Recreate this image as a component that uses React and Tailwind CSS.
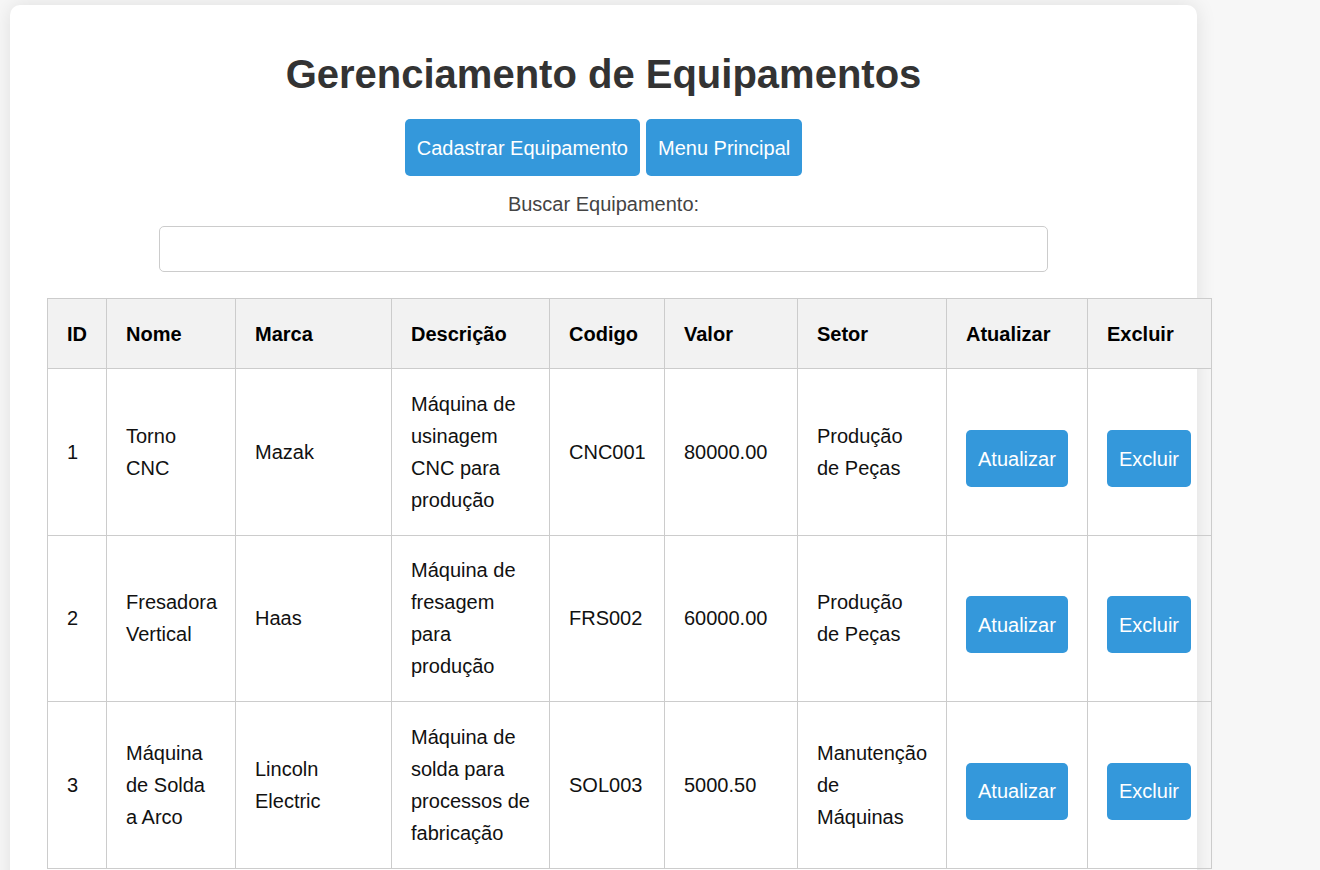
import React, { useState } from "react";

const equipamentos = [
  {
    id: 1,
    nome: "Torno CNC",
    marca: "Mazak",
    descricao: "Máquina de usinagem CNC para produção",
    codigo: "CNC001",
    valor: "80000.00",
    setor: "Produção de Peças",
  },
  {
    id: 2,
    nome: "Fresadora Vertical",
    marca: "Haas",
    descricao: "Máquina de fresagem para produção",
    codigo: "FRS002",
    valor: "60000.00",
    setor: "Produção de Peças",
  },
  {
    id: 3,
    nome: "Máquina de Solda a Arco",
    marca: "Lincoln Electric",
    descricao: "Máquina de solda para processos de fabricação",
    codigo: "SOL003",
    valor: "5000.50",
    setor: "Manutenção de Máquinas",
  },
];

// larguras das colunas (borda a borda)
const colunas = [
  { label: "ID", w: "w-[59px]" },
  { label: "Nome", w: "w-[129px]" },
  { label: "Marca", w: "w-[156px]" },
  { label: "Descrição", w: "w-[158px]" },
  { label: "Codigo", w: "w-[115px]" },
  { label: "Valor", w: "w-[133px]" },
  { label: "Setor", w: "w-[149px]" },
  { label: "Atualizar", w: "w-[141px]" },
  { label: "Excluir", w: "w-[124px]" },
];

const btn =
  "bg-[#3498db] text-white text-[20px] leading-[32px] px-[12px] py-[12.5px] rounded-[5px] cursor-pointer";

const td = "border border-[#ccc] px-[19px] py-[18.7px] align-middle text-left";

const App = () => {
  const [busca, setBusca] = useState("");

  return (
    <div
      className="min-h-screen bg-[#f7f7f7] pt-[5px] pl-[10px] text-[#333]"
      style={{ fontFamily: '"Liberation Sans", Arial, sans-serif' }}
    >
      <div className="w-[1187px] min-h-[900px] bg-white rounded-[10px] shadow-[0_0_20px_rgba(0,0,0,0.1)] px-[37px] pt-[37px]">
        {/* cabeçalho */}
        <h1 className="text-center text-[40px] leading-[64px] font-bold text-[#333]">
          Gerenciamento de Equipamentos
        </h1>

        <div className="flex justify-center gap-[6px] mt-[13px]">
          <button className={`${btn} px-[12.5px]`}>Cadastrar Equipamento</button>
          <button className={`${btn} px-[12.5px]`}>Menu Principal</button>
        </div>

        {/* busca */}
        <div className="flex flex-col items-center mt-[12px]">
          <label className="text-[20px] leading-[32px] text-[#444]">Buscar Equipamento:</label>
          <input
            type="text"
            value={busca}
            onChange={(e) => setBusca(e.target.value)}
            className="mt-[6px] w-[889px] h-[46px] border border-[#ccc] rounded-[5px] px-[10px] text-[16px] outline-none"
          />
        </div>

        {/* tabela */}
        <table className="mt-[26px] w-[1164px] table-fixed border-collapse text-[20px] leading-[32px] text-[#111]">
          <colgroup>
            {colunas.map((c) => (
              <col key={c.label} className={c.w} />
            ))}
          </colgroup>
          <thead>
            <tr>
              {colunas.map((c) => (
                <th key={c.label} className={`${td} bg-[#f2f2f2] font-bold text-black`}>
                  {c.label}
                </th>
              ))}
            </tr>
          </thead>
          <tbody>
            {equipamentos.map((e) => (
              <tr key={e.id}>
                <td className={td}>{e.id}</td>
                <td className={td}>{e.nome}</td>
                <td className={td}>{e.marca}</td>
                <td className={td}>{e.descricao}</td>
                <td className={td}>{e.codigo}</td>
                <td className={td}>{e.valor}</td>
                <td className={td}>{e.setor}</td>
                <td className={td}>
                  <button className={`${btn} mt-[13px]`}>Atualizar</button>
                </td>
                <td className={td}>
                  <button className={`${btn} mt-[13px]`}>Excluir</button>
                </td>
              </tr>
            ))}
          </tbody>
        </table>
      </div>
    </div>
  );
};

export default App;
